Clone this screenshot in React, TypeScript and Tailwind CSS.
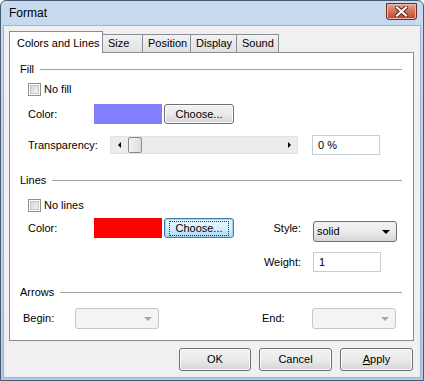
const font = { fontFamily: '"Liberation Sans", Arial, sans-serif' };

function Header({ label }: { label: string }) {
  return (
    <div className="flex h-[14px] items-center pl-[10px] pr-[11px]">
      <span className="pr-[6px]">{label}</span>
      <div className="h-px flex-1 bg-[#a0a0a0]" />
    </div>
  );
}

function Checkbox({ label }: { label: string }) {
  return (
    <div className="flex h-[15px] items-center pl-[18px]">
      <div className="flex h-[13px] w-[13px] items-center justify-center border border-[#8e8f8f] bg-white">
        <div className="h-[9px] w-[9px] border border-[#c4c4c4] bg-gradient-to-br from-[#d4d4d4] to-[#f6f6f6]" />
      </div>
      <span className="ml-[3px]">{label}</span>
    </div>
  );
}

function Button({ label, focused, className = "" }: { label: React.ReactNode; focused?: boolean; className?: string }) {
  return (
    <div
      className={`flex items-center justify-center rounded-[3px] border ${
        focused
          ? "border-[#3c7fb1] bg-gradient-to-b from-[#eaf6fd] via-[#d9f0fc] to-[#a7d9f5] shadow-[inset_0_0_0_1px_#9fd5f3]"
          : "border-[#707070] bg-gradient-to-b from-[#f2f2f2] via-[#ebebeb] to-[#d4d4d4] shadow-[inset_0_0_0_1px_#fcfcfc]"
      } ${className}`}
    >
      <span className={focused ? "border border-dotted border-[#333] px-[5px] leading-[13px]" : ""}>{label}</span>
    </div>
  );
}

function DisabledSelect({ className = "" }: { className?: string }) {
  return (
    <div className={`flex h-[21px] w-[84px] items-center justify-end rounded-[3px] border border-[#c6c6c6] bg-[#f4f4f4] pr-[6px] ${className}`}>
      <div className="h-0 w-0 border-x-[4px] border-t-[4px] border-x-transparent border-t-[#a8a8a8]" />
    </div>
  );
}

export default function App() {
  const tabs = [
    { name: "Size", w: "w-[41px]" },
    { name: "Position", w: "w-[49px]" },
    { name: "Display", w: "w-[47px]" },
    { name: "Sound", w: "w-[43px]" },
  ];

  return (
    <div
      style={font}
      className="flex h-[381px] w-[424px] flex-col rounded-t-[6px] border border-[#4a5a70] bg-gradient-to-b from-[#c6daf0] to-[#b3cbe6] px-[2px] pb-[2px] text-[11px] text-black"
    >
      <div className="flex h-[24px] items-center justify-between pl-[6px] pr-[4px]">
        <span className="text-[12px]">Format</span>
        <div className="mt-[-4px] flex h-[17px] w-[31px] items-center justify-center rounded-b-[3px] border border-[#6f2a22] bg-gradient-to-b from-[#e5a493] via-[#d4705a] to-[#c2402a] shadow-[inset_0_0_0_1px_#f0b8a8]">
          <svg width="13" height="11" viewBox="0 0 13 11">
            <path d="M2 1.5 L11 9.5 M11 1.5 L2 9.5" stroke="#5a1e16" strokeWidth="4" strokeLinecap="square" />
            <path d="M2 1.5 L11 9.5 M11 1.5 L2 9.5" stroke="#fff" strokeWidth="2.2" strokeLinecap="square" />
          </svg>
        </div>
      </div>

      <div className="flex flex-1 flex-col border border-[#9eb4cc] bg-[#f0f0f0] pl-[5px] pr-[6px] pt-[5px]">
        <div className="flex h-[21px] items-end">
          <div className="relative z-10 -mb-px flex h-[22px] w-[94px] items-start border border-b-0 border-[#898c95] bg-white pl-[7px] pt-[3px]">
            Colors and Lines
          </div>
          {tabs.map((t) => (
            <div
              key={t.name}
              className={`-ml-px flex h-[18px] ${t.w} items-center border border-b-0 border-[#898c95] bg-gradient-to-b from-[#f2f2f2] to-[#e0e0e0] pl-[5px]`}
            >
              {t.name}
            </div>
          ))}
        </div>

        <div className="h-[289px] w-[405px] border border-[#898c95] bg-white">
          <div className="mt-[9px]">
            <Header label="Fill" />
          </div>
          <div className="mt-[6px]">
            <Checkbox label="No fill" />
          </div>
          <div className="mt-[7px] flex h-[20px] items-center pl-[18px]">
            <span className="w-[66px]">Color:</span>
            <div className="h-[20px] w-[68px] bg-[#8080ff]" />
            <Button label="Choose..." className="ml-[2px] h-[20px] w-[70px]" />
          </div>
          <div className="mt-[11px] flex h-[20px] items-center pl-[18px]">
            <span className="w-[82px]">Transparency:</span>
            <div className="flex h-[18px] w-[188px] items-center border border-[#e3e3e3] bg-[#ececec]">
              <div className="ml-[7px] h-0 w-0 border-y-[3px] border-r-[3px] border-y-transparent border-r-black" />
              <div className="ml-[7px] h-[16px] w-[14px] rounded-[2px] border border-[#8c8c8c] bg-gradient-to-r from-[#f4f4f4] to-[#dcdcdc]" />
              <div className="flex-1" />
              <div className="mr-[6px] h-0 w-0 border-y-[3px] border-l-[3px] border-y-transparent border-l-black" />
            </div>
            <div className="ml-[14px] flex h-[20px] w-[68px] items-center border border-[#c8ccd4] pl-[5px]">0 %</div>
          </div>

          <div className="mt-[18px]">
            <Header label="Lines" />
          </div>
          <div className="mt-[11px]">
            <Checkbox label="No lines" />
          </div>
          <div className="mt-[5px] grid h-[20px] grid-cols-[66px_68px_73px_66px_12px_84px] items-start pl-[18px]">
            <span className="flex h-[20px] items-center">Color:</span>
            <div className="h-[20px] bg-[#ff0000]" />
            <Button label="Choose..." focused className="ml-[2px] h-[20px] w-[70px]" />
            <span className="flex h-[20px] items-center justify-end">Style:</span>
            <span />
            <div className="mt-[3px] flex h-[21px] items-center justify-between rounded-[3px] border border-[#707070] bg-gradient-to-b from-[#f2f2f2] via-[#ebebeb] to-[#d6d6d6] pl-[3px] pr-[6px]">
              <span>solid</span>
              <div className="h-0 w-0 border-x-[4px] border-t-[4px] border-x-transparent border-t-black" />
            </div>
          </div>
          <div className="mt-[14px] grid h-[20px] grid-cols-[66px_68px_73px_66px_12px_84px] items-center pl-[18px]">
            <span />
            <span />
            <span />
            <span className="text-right">Weight:</span>
            <span />
            <div className="flex h-[20px] w-[68px] items-center border border-[#c8ccd4] pl-[5px]">1</div>
          </div>

          <div className="mt-[13px]">
            <Header label="Arrows" />
          </div>
          <div className="mt-[9px] grid h-[20px] grid-cols-[52px_84px_103px_50px_84px] items-center pl-[13px]">
            <span>Begin:</span>
            <DisabledSelect className="w-[84px]" />
            <span />
            <span>End:</span>
            <DisabledSelect />
          </div>
        </div>

        <div className="mt-[7px] flex justify-end gap-[8px] pr-px">
          <Button label="OK" className="h-[23px] w-[72px]" />
          <Button label="Cancel" className="h-[23px] w-[73px]" />
          <Button
            label={
              <>
                <span className="underline">A</span>pply
              </>
            }
            className="h-[23px] w-[73px]"
          />
        </div>
      </div>
    </div>
  );
}
